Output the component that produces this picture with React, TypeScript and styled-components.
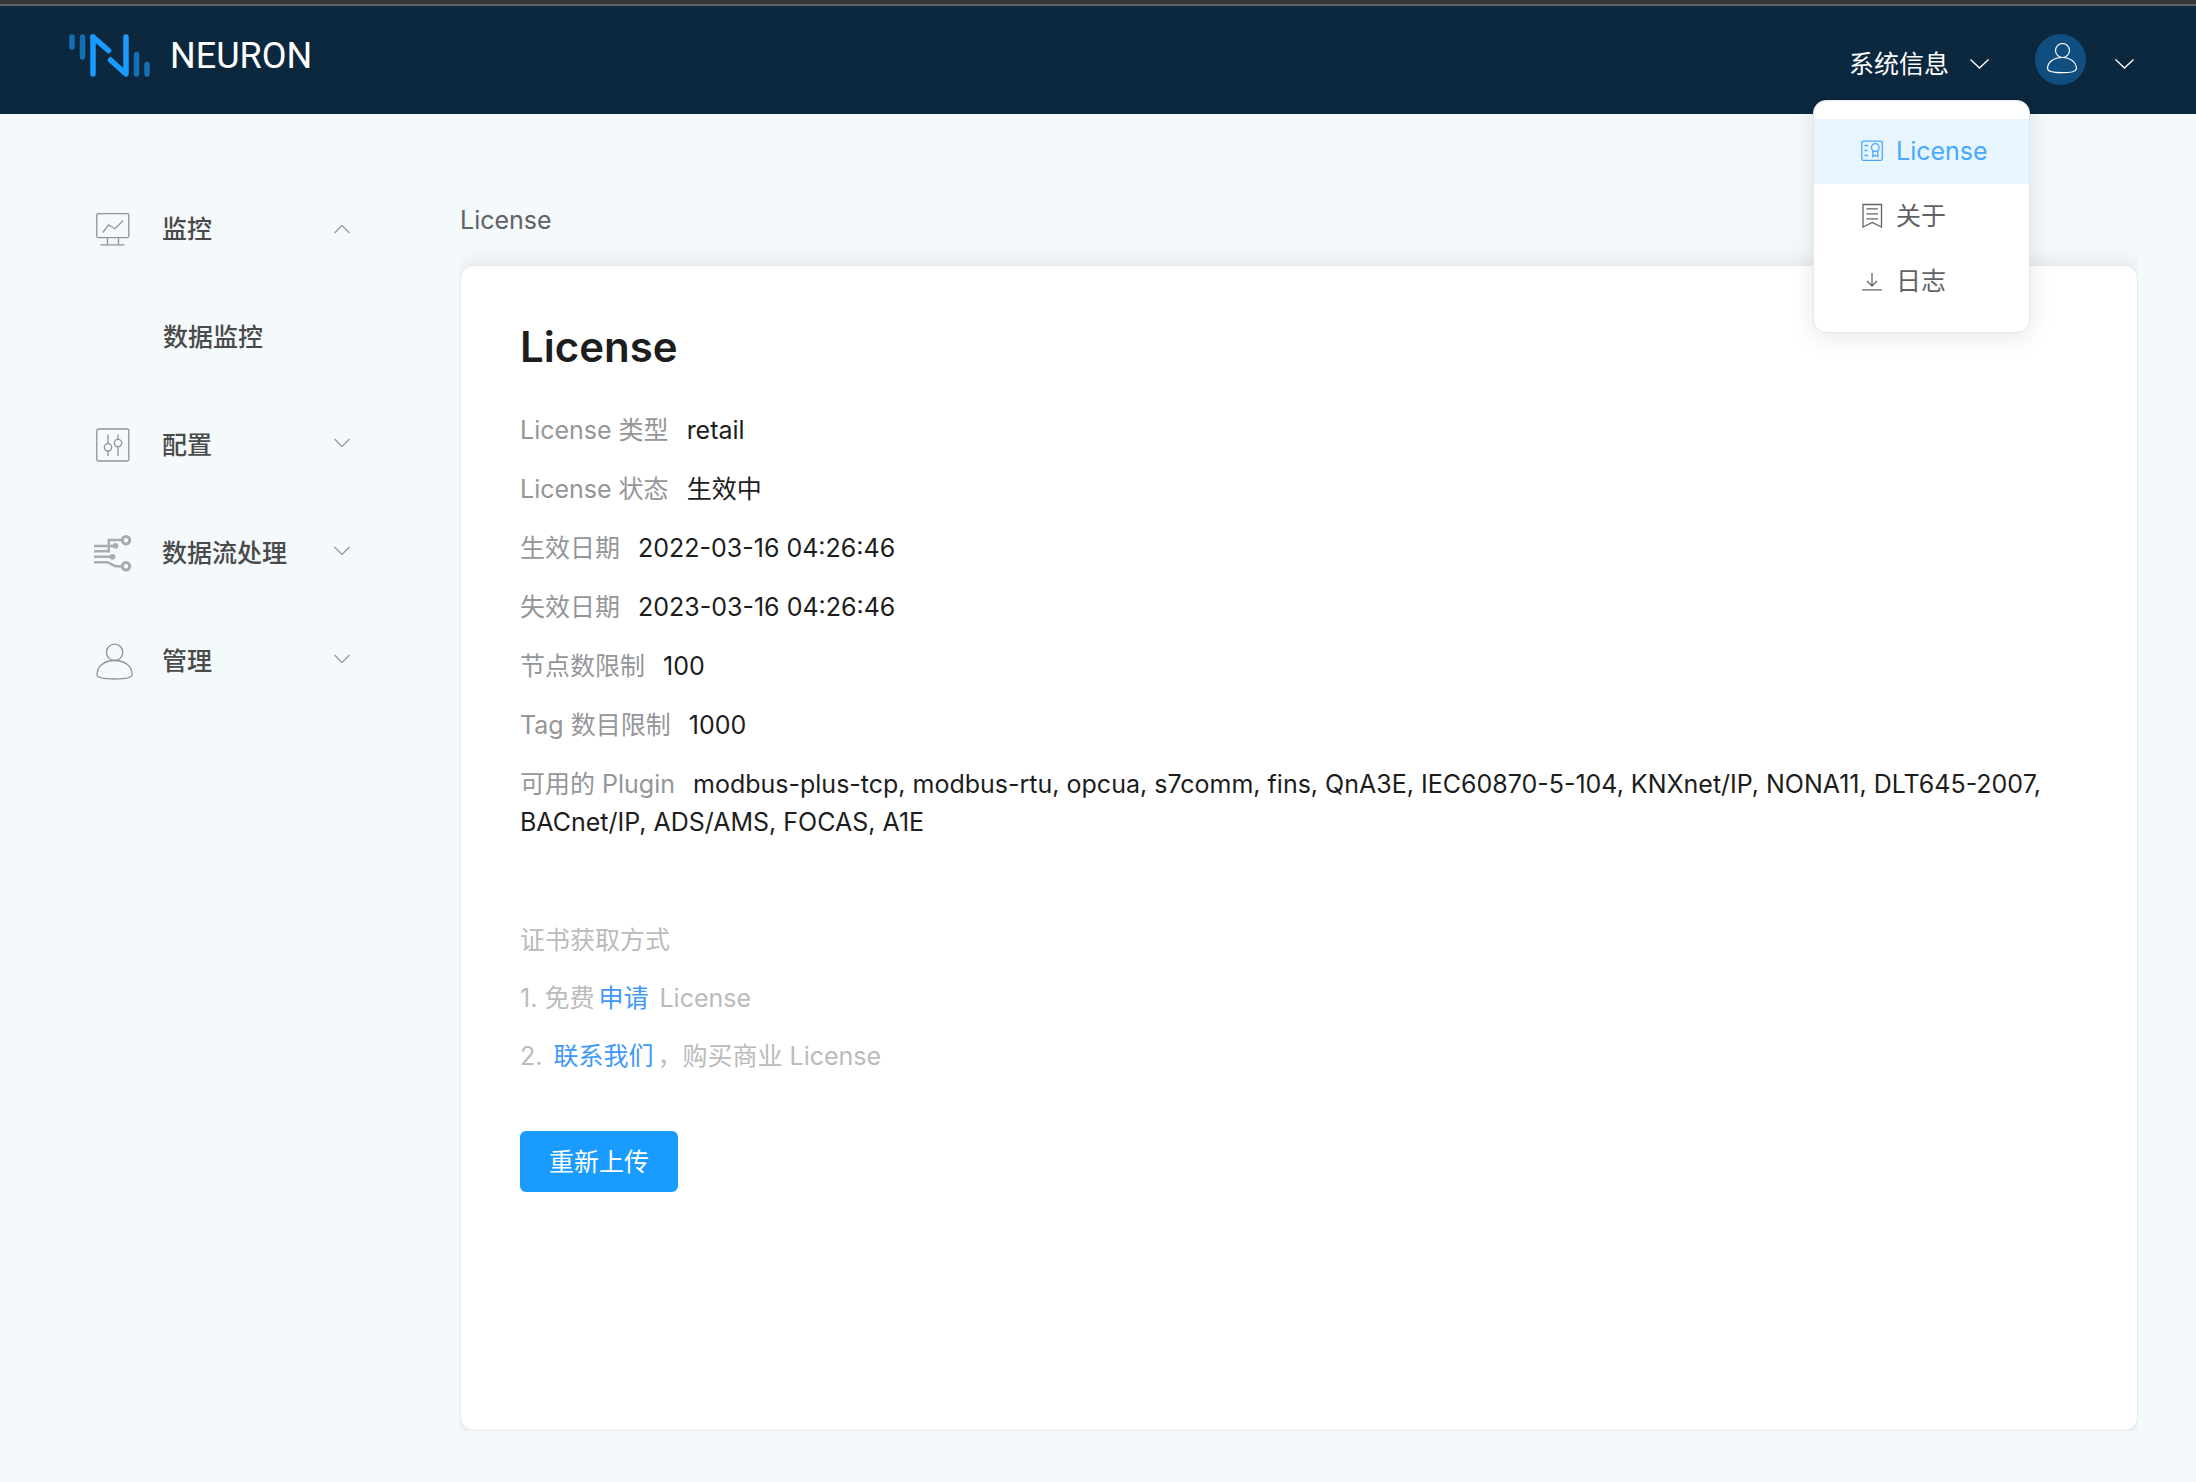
import React from 'react';
import styled, { createGlobalStyle } from 'styled-components';

const GlobalStyle = createGlobalStyle`
  *, *::before, *::after { box-sizing: border-box; }
  html { background: #f4f9fc; }
  body {
    margin: 0;
    font-family: Inter, "Noto Sans CJK SC", sans-serif;
    font-size: 25px;
    line-height: 38px;
    color: #1d1d1d;
  }
  h1, p, dl, dd, ul { margin: 0; padding: 0; }
  ul { list-style: none; }
  button { font: inherit; color: inherit; background: none; border: 0; padding: 0; cursor: pointer; }
  svg { display: block; flex: none; }
`;

const Page = styled.div`
  display: flex;
  flex-direction: column;
  min-height: 100vh;
`;

const Header = styled.header`
  display: flex;
  align-items: center;
  justify-content: space-between;
  height: 114px;
  padding: 0 62px 0 69px;
  border-top: 4px solid #35363a;
  background: #0c283e;
  box-shadow: inset 0 2px 0 #5f6164;
  color: #fff;
`;

const Brand = styled.a`
  display: flex;
  align-items: center;
  gap: 20px;
  padding-bottom: 7px;
  color: #fff;
  font-family: Roboto, sans-serif;
  font-size: 36px;
  text-decoration: none;
`;

const HeaderTools = styled.div`
  display: flex;
  align-items: center;
  gap: 46px;
`;

const MenuAnchor = styled.div`
  position: relative;
`;

const InfoTrigger = styled.button`
  display: flex;
  align-items: center;
  gap: 21px;
  padding-top: 10px;
`;

const UserTrigger = styled.button`
  display: flex;
  align-items: center;
  gap: 29px;
`;

const Avatar = styled.span`
  display: grid;
  place-items: center;
  width: 51px;
  height: 51px;
  border-radius: 50%;
  background: #114e80;
`;

const ChevronSlot = styled.span`
  padding-top: 10px;
`;

const Dropdown = styled.ul`
  position: absolute;
  z-index: 10;
  top: calc(100% + 17px);
  right: -41px;
  width: 217px;
  padding: 18px 0;
  border: 1px solid #e4e7ed;
  border-radius: 13px;
  background: #fff;
  box-shadow: 0 4px 24px rgba(0, 0, 0, 0.1);
`;

const DropdownItem = styled.a<{ $active?: boolean }>`
  display: flex;
  align-items: center;
  gap: 12px;
  height: 65px;
  padding: 0 0 2px 46px;
  background: ${(p) => (p.$active ? '#e8f4fe' : 'transparent')};
  color: ${(p) => (p.$active ? '#46aaff' : '#606266')};
  text-decoration: none;
`;

const Body = styled.div`
  display: flex;
  flex: 1;
  gap: 110px;
  padding: 0 58px 0 94px;
`;

const Sidebar = styled.nav`
  flex: none;
  width: 256px;
  padding-top: 61px;
`;

const NavItem = styled.button`
  display: grid;
  grid-template-columns: 40px 1fr 16px;
  align-items: center;
  column-gap: 28px;
  width: 100%;
  height: 108px;
  color: #909399;
  text-align: left;
`;

const NavLabel = styled.span`
  color: #4a4a4a;
  font-weight: 500;
  white-space: nowrap;
`;

const SubItem = styled.a`
  display: flex;
  align-items: center;
  height: 108px;
  padding-left: 69px;
  color: #4a4a4a;
  font-weight: 500;
  text-decoration: none;
`;

const Main = styled.main`
  display: flex;
  flex: 1;
  flex-direction: column;
  min-width: 0;
  padding: 87px 0 51px;
`;

const Breadcrumb = styled.p`
  color: #606266;
`;

const CardFrame = styled.div`
  display: flex;
  flex: 1;
  padding-top: 26px;
  overflow: hidden;
`;

const Card = styled.section`
  flex: 1;
  padding: 55px 59px;
  border: 1px solid #e6ebf2;
  border-radius: 14px;
  background: #fff;
  box-shadow: 0 0 24px rgba(0, 0, 0, 0.1);
`;

const Title = styled.h1`
  font-size: 42px;
  font-weight: 600;
  line-height: 52px;
`;

const Details = styled.dl`
  display: flex;
  flex-direction: column;
  gap: 21px;
  margin-top: 38px;
`;

const Term = styled.dt`
  display: inline;
  margin-right: 18px;
  color: #959699;
`;

const Value = styled.dd`
  display: inline;
`;

const Hints = styled.div`
  display: flex;
  flex-direction: column;
  gap: 20px;
  margin-top: 80px;
  color: #bbbbbb;
`;

const HintLink = styled.a`
  padding: 0 4px;
  color: #4098fc;
  text-decoration: none;
`;

const UploadButton = styled.button`
  height: 61px;
  margin-top: 56px;
  padding: 0 29px;
  border-radius: 6px;
  background: #1a9bff;
  color: #fff;
`;

const Logo = () => (
  <svg width="81" height="43" viewBox="0 0 81 43" fill="none" strokeWidth="6" strokeLinecap="round" strokeLinejoin="round" aria-hidden="true">
    <path d="M3 3v10M13.500 3v20M67.500 20.500V40M78 30.500V40" stroke="#146fb3" strokeWidth="5.500" />
    <path d="M24 40V3" stroke="#1a9bff" strokeWidth="5.500" />
    <path d="M24 3L39.500 16.500" stroke="#1a9bff" strokeWidth="5.500" />
    <path d="M41.500 26L57 40V3" stroke="#1a9bff" strokeWidth="5.500" />
  </svg>
);

const HeaderChevron = () => (
  <svg width="19" height="10" viewBox="0 0 19 10" fill="none" stroke="currentColor" strokeWidth="1.300" aria-hidden="true">
    <path d="M.5.500L9.500 9l9-8.500" />
  </svg>
);

const NavChevron = ({ open }: { open?: boolean }) => (
  <svg width="16" height="16" viewBox="0 0 16 16" fill="none" stroke="currentColor" strokeWidth="1.200" aria-hidden="true">
    <path d={open ? 'M.5 12L8 4.500 15.500 12' : 'M.5 2L8 9.500l7.500-7.500'} />
  </svg>
);

const AvatarIcon = () => (
  <svg width="32" height="32" viewBox="0 0 32 32" fill="none" stroke="#fff" strokeWidth="1.200" aria-hidden="true">
    <circle cx="17.500" cy="7.500" r="7" />
    <path d="M17 14.500c-8.500 0-14.500 5-14.500 11 0 3 5 4.200 14.500 4.200S31.500 28.500 31.500 25.500c0-6-6-11-14.500-11z" />
  </svg>
);

const navIconProps = {
  width: 40,
  height: 40,
  viewBox: '0 0 40 40',
  fill: 'none',
  stroke: 'currentColor',
  strokeWidth: 1.3,
  'aria-hidden': true,
};

const MonitorIcon = () => (
  <svg {...navIconProps}>
    <rect x="2.800" y="4.600" width="32" height="24" rx="1.500" />
    <path d="M8.800 23.500l5.700-7.700 6.500 4 8-8M13.500 28.600v7.700M24.500 28.600v7.700M6.500 35.800h24" />
  </svg>
);

const ConfigIcon = () => (
  <svg {...navIconProps}>
    <rect x="2.800" y="4" width="32" height="32" rx="1.500" />
    <path d="M14 9.500v9M14 26v5M24 9.500v5M24 22v9" />
    <circle cx="14" cy="22.300" r="3.700" />
    <circle cx="24" cy="18.100" r="3.700" />
  </svg>
);

const FlowIcon = () => (
  <svg {...navIconProps} stroke="#a8abb1" strokeWidth={2.4}>
    <path d="M0 13h21M0 18.300h14.800V7h13M0 23.800h18M0 29.200h13.500l8 4H28" />
    <circle cx="21.500" cy="12.800" r="2.800" fill="#a8abb1" stroke="none" />
    <circle cx="18.500" cy="23.800" r="2.800" fill="#a8abb1" stroke="none" />
    <circle cx="32" cy="7.200" r="3.700" strokeWidth={3} />
    <circle cx="32" cy="33.300" r="3.700" strokeWidth={3} />
  </svg>
);

const AdminIcon = () => (
  <svg {...navIconProps}>
    <circle cx="20.600" cy="11.300" r="8.200" />
    <path d="M20.600 19.500C10 19.500 3 25.500 3 33.500c0 3.200 6 4.500 17.600 4.500s17.600-1.300 17.600-4.500c0-8-7-14-17.600-14z" />
  </svg>
);

const itemIconProps = {
  width: 24,
  height: 26,
  viewBox: '0 0 24 26',
  fill: 'none',
  stroke: 'currentColor',
  strokeWidth: 1.3,
  'aria-hidden': true,
};

const LicenseIcon = () => (
  <svg {...itemIconProps}>
    <rect x="1.800" y="3.100" width="20.500" height="19.200" rx="1.500" />
    <path d="M4.500 7.500h3.700M4.500 12.500h3M4.500 17.500h3.700M12.800 13v5.700l2.500-1.500 2.500 1.500v-5.700" />
    <circle cx="15.300" cy="9.500" r="3.800" />
  </svg>
);

const AboutIcon = () => (
  <svg {...itemIconProps}>
    <path d="M3 24V1.500h18.500V24l-9.300-4.500zM6.500 5.800h11.500M6.500 10.800h11.500M6.500 15.800h11.500" />
  </svg>
);

const LogIcon = () => (
  <svg {...itemIconProps}>
    <path d="M12 5v13M7 13l5 5 5-5M2 21.800h20" />
  </svg>
);

const navItems = [
  { label: '监控', Icon: MonitorIcon, children: ['数据监控'] },
  { label: '配置', Icon: ConfigIcon },
  { label: '数据流处理', Icon: FlowIcon },
  { label: '管理', Icon: AdminIcon },
];

const infoItems = [
  { label: 'License', Icon: LicenseIcon, active: true },
  { label: '关于', Icon: AboutIcon },
  { label: '日志', Icon: LogIcon },
];

const details = [
  ['License 类型', 'retail'],
  ['License 状态', '生效中'],
  ['生效日期', '2022-03-16 04:26:46'],
  ['失效日期', '2023-03-16 04:26:46'],
  ['节点数限制', '100'],
  ['Tag 数目限制', '1000'],
  [
    '可用的 Plugin',
    'modbus-plus-tcp, modbus-rtu, opcua, s7comm, fins, QnA3E, IEC60870-5-104, KNXnet/IP, NONA11, DLT645-2007, BACnet/IP, ADS/AMS, FOCAS, A1E',
  ],
];

export default function App() {
  return (
    <Page lang="zh-CN">
      <GlobalStyle />
      <Header>
        <Brand href="#">
          <Logo />
          NEURON
        </Brand>
        <HeaderTools>
          <MenuAnchor>
            <InfoTrigger type="button" aria-expanded="true">
              系统信息
              <HeaderChevron />
            </InfoTrigger>
            <Dropdown>
              {infoItems.map(({ label, Icon, active }) => (
                <li key={label}>
                  <DropdownItem href="#" $active={active}>
                    <Icon />
                    {label}
                  </DropdownItem>
                </li>
              ))}
            </Dropdown>
          </MenuAnchor>
          <UserTrigger type="button" aria-label="用户">
            <Avatar>
              <AvatarIcon />
            </Avatar>
            <ChevronSlot>
              <HeaderChevron />
            </ChevronSlot>
          </UserTrigger>
        </HeaderTools>
      </Header>
      <Body>
        <Sidebar>
          {navItems.map(({ label, Icon, children }) => (
            <React.Fragment key={label}>
              <NavItem type="button" aria-expanded={!!children}>
                <Icon />
                <NavLabel>{label}</NavLabel>
                <NavChevron open={!!children} />
              </NavItem>
              {children?.map((child) => (
                <SubItem key={child} href="#">
                  {child}
                </SubItem>
              ))}
            </React.Fragment>
          ))}
        </Sidebar>
        <Main>
          <Breadcrumb>License</Breadcrumb>
          <CardFrame>
            <Card>
              <Title>License</Title>
              <Details>
                {details.map(([term, value]) => (
                  <div key={term}>
                    <Term>{term}</Term>
                    <Value>{value}</Value>
                  </div>
                ))}
              </Details>
              <Hints>
                <p>证书获取方式</p>
                <p>
                  1. 免费<HintLink href="#">申请</HintLink> License
                </p>
                <p>
                  2. <HintLink href="#">联系我们</HintLink>，购买商业 License
                </p>
              </Hints>
              <UploadButton type="button">重新上传</UploadButton>
            </Card>
          </CardFrame>
        </Main>
      </Body>
    </Page>
  );
}
